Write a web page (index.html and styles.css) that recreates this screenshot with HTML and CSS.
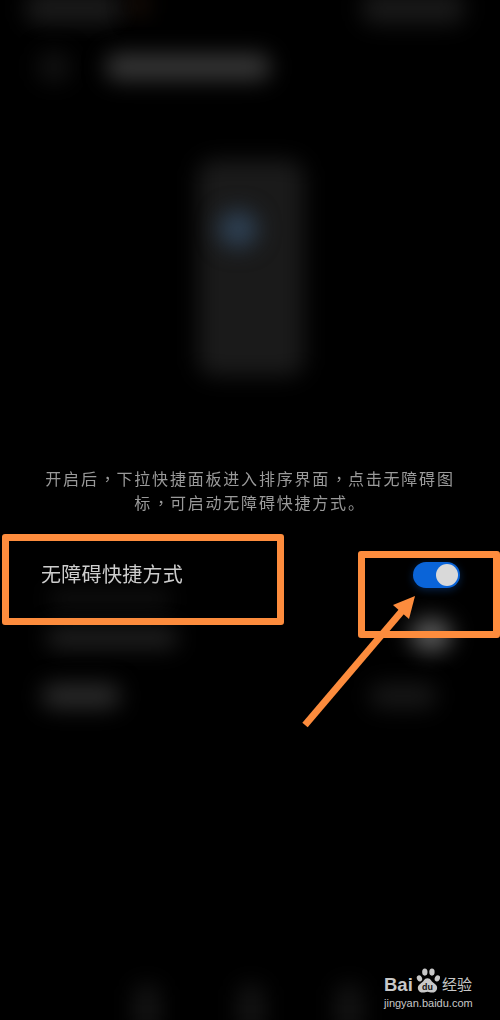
FILE: index.html
```html
<!DOCTYPE html>
<html lang="zh-CN">
<head>
<meta charset="utf-8">
<title>无障碍快捷方式</title>
<link rel="stylesheet" href="styles.css">
</head>
<body>
<div class="screen">
  <div class="blob blob-status-left"></div>
  <div class="blob blob-status-spot"></div>
  <div class="blob blob-status-right"></div>
  <div class="blob blob-back"></div>
  <div class="blob blob-title"></div>
  <div class="blob blob-phone"></div>
  <div class="blob blob-phone-dot"></div>
  <div class="blob blob-sub-a"></div>
  <div class="blob blob-row-left"></div>
  <div class="blob blob-row-right"></div>
  <div class="blob blob-low-left"></div>
  <div class="blob blob-low-right"></div>
  <div class="blob blob-nav-a"></div>
  <div class="blob blob-nav-b"></div>
  <div class="blob blob-nav-c"></div>

  <main class="content">
    <p class="desc"><span class="line">开启后<span class="punct" lang="zh-TW">，</span>下拉快捷面板进入排序界面<span class="punct" lang="zh-TW">，</span>点击无障碍图</span><span class="line">标<span class="punct" lang="zh-TW">，</span>可启动无障碍快捷方式。</span></p>
    <div class="row">
      <span class="row-label">无障碍快捷方式</span>
      <span class="toggle"><span class="knob"></span></span>
    </div>
  </main>

  <div class="mark mark-label"></div>
  <div class="mark mark-toggle"></div>
  <svg class="arrow" viewBox="0 0 500 1020" aria-hidden="true">
    <path d="M305 725 L402 611" fill="none" stroke="#fd8c3d" stroke-width="7"/>
    <path d="M415 596 L393 605 L409 619 Z" fill="#fd8c3d"/>
  </svg>

  <div class="logo">
    <div class="logo-top">
      <span class="logo-bai">Bai</span>
      <svg class="paw" viewBox="0 0 28 30" aria-hidden="true">
        <ellipse cx="5" cy="12" rx="2.8" ry="3.6" fill="#c8c8c8" transform="rotate(-25 5 12)"/>
        <ellipse cx="11" cy="5" rx="3" ry="4" fill="#c8c8c8"/>
        <ellipse cx="19" cy="5" rx="3" ry="4" fill="#c8c8c8"/>
        <ellipse cx="25" cy="12" rx="2.8" ry="3.6" fill="#c8c8c8" transform="rotate(25 25 12)"/>
        <path d="M14 12 C10 12 10 16 6 18 C1 21 3 28 9 28 C11 28 12 27 14 27 C16 27 17 28 19 28 C25 28 27 21 22 18 C18 16 18 12 14 12 Z" fill="#c8c8c8"/>
        <text x="14" y="25" class="paw-text">du</text>
      </svg>
      <span class="logo-jy">经验</span>
    </div>
    <div class="logo-url">jingyan.baidu.com</div>
  </div>
</div>
</body>
</html>
```
FILE: styles.css
```css
* { box-sizing: border-box; }
html, body { margin: 0; padding: 0; background: #000; }
.screen {
  position: relative;
  width: 500px;
  height: 1020px;
  overflow: hidden;
  background: #000;
  font-family: "Liberation Sans", "Noto Sans CJK SC", sans-serif;
}
.content { position: relative; padding-top: 466px; }
.desc {
  margin: 0 auto;
  width: 420px;
  font-family: "Noto Sans CJK SC", sans-serif;
  font-size: 16px;
  line-height: 24px;
  letter-spacing: 1.8px;
  text-align: center;
  color: #9a9a9a;
  filter: blur(.4px);
}
.line { display: block; white-space: nowrap; }
.punct {
  display: inline-block;
  width: 17.8px;
  font-family: "Noto Sans CJK TC", sans-serif;
  letter-spacing: 0;
  line-height: 20px;
}
.row {
  display: flex;
  justify-content: space-between;
  align-items: center;
  margin-top: 48px;
  padding: 0 40px 0 41px;
  height: 26px;
}
.row-label {
  font-family: "Noto Sans CJK SC", sans-serif;
  font-size: 20px;
  letter-spacing: .3px;
  padding-bottom: 4px;
  color: #cdcdcd;
  filter: blur(.4px);
}
.toggle {
  display: flex;
  justify-content: flex-end;
  align-items: center;
  width: 47px;
  height: 26px;
  padding-right: 2px;
  border-radius: 13px;
  background: #0a64d8;
  box-shadow: 0 2px 8px rgba(20, 100, 210, .35);
}
.knob { width: 22px; height: 22px; border-radius: 50%; background: #d9d9d9; }

.blob { position: absolute; filter: blur(11px); border-radius: 10px; }
.blob-status-left { left: 26px; top: -8px; width: 96px; height: 32px; background: #1a1a1a; }
.blob-status-spot { left: 132px; top: -8px; width: 14px; height: 24px; background: #24140a; }
.blob-status-right { left: 362px; top: -8px; width: 102px; height: 32px; background: #191919; }
.blob-back { left: 38px; top: 52px; width: 32px; height: 30px; background: #111; }
.blob-title { left: 106px; top: 54px; width: 164px; height: 26px; background: #383838; }
.blob-phone { left: 198px; top: 160px; width: 106px; height: 216px; background: #1a1a1a; border-radius: 16px; }
.blob-phone-dot { left: 218px; top: 210px; width: 40px; height: 38px; background: #2e4053; border-radius: 50%; }
.blob-sub-a { left: 48px; top: 590px; width: 124px; height: 18px; background: #111; }
.blob-row-left { left: 46px; top: 628px; width: 132px; height: 20px; background: #222; }
.blob-row-right { left: 410px; top: 618px; width: 42px; height: 34px; background: #5a5a5a; border-radius: 50%; }
.blob-low-left { left: 42px; top: 684px; width: 78px; height: 24px; background: #2c2c2c; }
.blob-low-right { left: 370px; top: 684px; width: 66px; height: 24px; background: #181818; }
.blob-nav-a { left: 134px; top: 984px; width: 26px; height: 50px; background: #141414; }
.blob-nav-b { left: 238px; top: 984px; width: 26px; height: 50px; background: #141414; }
.blob-nav-c { left: 336px; top: 984px; width: 26px; height: 50px; background: #141414; }

.mark { position: absolute; border: 7px solid #fd8c3d; border-radius: 3px; }
.mark-label { left: 2px; top: 534px; width: 282px; height: 91px; }
.mark-toggle { left: 358px; top: 551px; width: 142px; height: 87px; }
.arrow { position: absolute; left: 0; top: 0; width: 500px; height: 1020px; }

.logo { position: absolute; left: 384px; top: 965px; width: 96px; color: #c8c8c8; }
.logo-top { display: flex; align-items: flex-end; height: 30px; }
.logo-bai { font-size: 18.5px; line-height: 20px; font-weight: 700; width: 31px; }
.paw { width: 25px; height: 28px; flex: none; }
.paw-text { font-family: "Liberation Sans", sans-serif; font-size: 10px; font-weight: 700; fill: #111; text-anchor: middle; }
.logo-jy { font-family: "Noto Sans CJK SC", sans-serif; font-size: 15px; line-height: 22px; margin-left: 2px; }
.logo-url { font-size: 11px; line-height: 13px; margin-top: 2px; white-space: nowrap; }
```
